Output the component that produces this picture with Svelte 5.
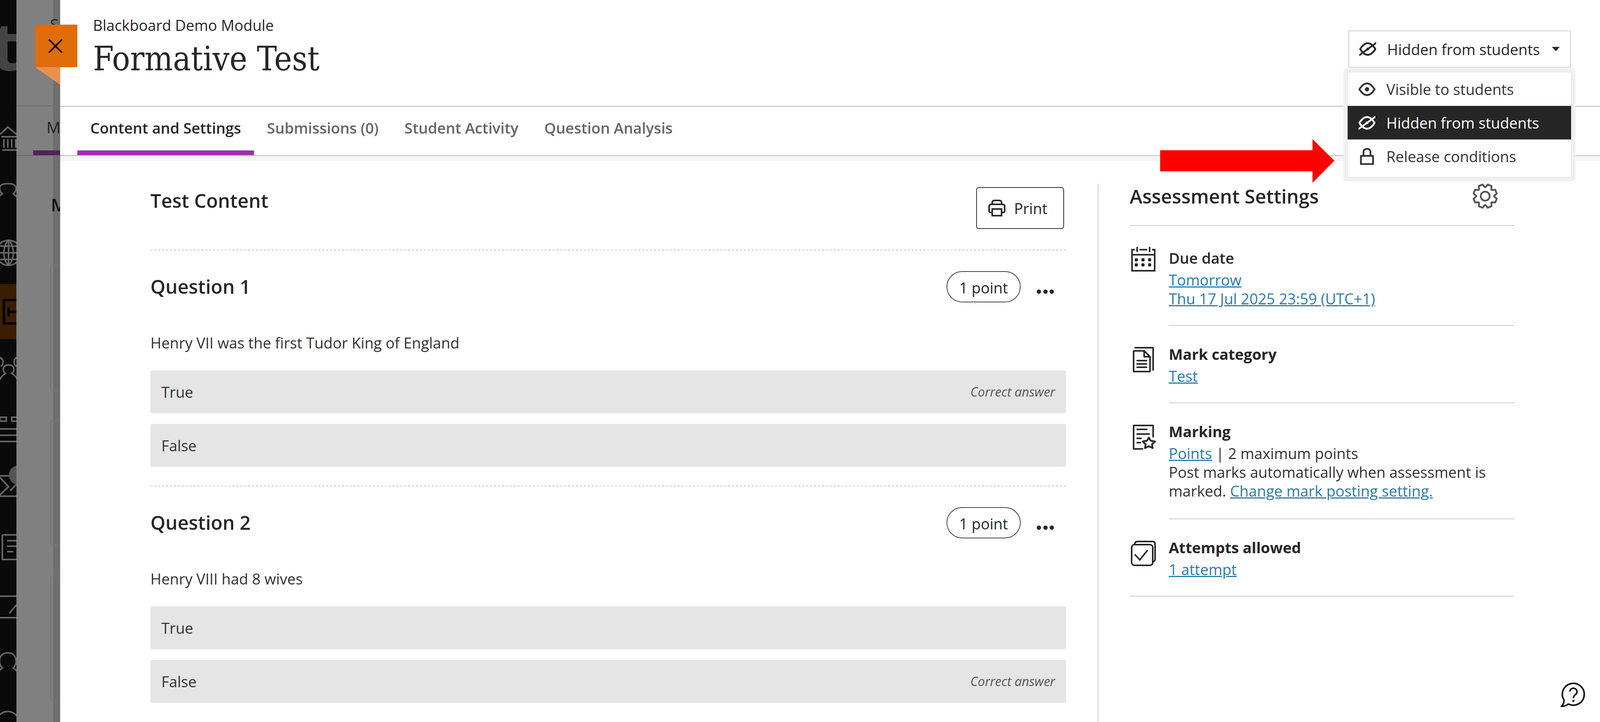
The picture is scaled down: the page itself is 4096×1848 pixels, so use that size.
<script>
    let questions = [
        { title: 'Question 1', prompt: 'Henry VII was the first Tudor King of England', correct: 'True' },
        { title: 'Question 2', prompt: 'Henry VIII had 8 wives', correct: 'False' }
    ];
    let tabs = ['Content and Settings', 'Submissions (0)', 'Student Activity', 'Question Analysis'];

    // 8 tooth outline for the settings cog, turned so a notch sits on top
    function gearPath(cx, cy, outer, inner) {
        let d = '';
        for (let i = 0; i < 8; i++) {
            let a = (i * Math.PI) / 4 - Math.PI / 2 + Math.PI / 8;
            let pts = [[inner, -0.36], [outer, -0.17], [outer, 0.17], [inner, 0.36]];
            for (let p of pts) {
                let x = cx + p[0] * Math.cos(a + p[1]);
                let y = cy + p[0] * Math.sin(a + p[1]);
                d += (d ? 'L' : 'M') + x.toFixed(1) + ' ' + y.toFixed(1);
            }
        }
        return d + 'Z';
    }
</script>

{#snippet eye()}
    <svg class="mi" viewBox="0 0 43 34">
        <path d="M2 17C9 6 15 2 21.5 2S34 6 41 17C34 28 28 32 21.5 32S9 28 2 17Z" fill="none" stroke="currentColor" stroke-width="4.5" stroke-linejoin="round" />
        <circle cx="21.5" cy="17" r="5.5" fill="currentColor" />
    </svg>
{/snippet}

{#snippet eyeOff()}
    <svg class="mi" viewBox="0 0 43 34">
        <path d="M2 17C9 6 15 2 21.5 2S34 6 41 17C34 28 28 32 21.5 32S9 28 2 17Z" fill="none" stroke="currentColor" stroke-width="4.5" stroke-linejoin="round" />
        <path d="M42 2L1 32" fill="none" stroke="currentColor" stroke-width="4.5" stroke-linecap="round" />
        <circle cx="21.5" cy="17" r="3.5" fill="currentColor" />
    </svg>
{/snippet}

<div class="page">
    <!-- what is left of the course page behind the panel -->
    <svg class="behind" viewBox="0 0 154 1848">
        <rect x="42" width="112" height="1848" fill="#808080" />
        <rect x="136" width="18" height="1848" fill="#6f6f6f" />
        <rect width="42" height="1848" fill="#0a0a0a" />
        <path d="M42 271H154M42 398H154" stroke="#6a6a6a" stroke-width="2" />
        <rect x="85" y="385" width="69" height="12" fill="#521f5c" />
        <text x="128" y="78" class="peek">SE</text>
        <text x="119" y="341" class="peek">M</text>
        <text x="130" y="541" class="peek bold">M</text>
        <g fill="none" stroke="#757575" stroke-width="2">
            <rect x="130" y="679" width="40" height="321" rx="6" />
            <rect x="130" y="1076" width="40" height="320" rx="6" />
            <rect x="130" y="1474" width="40" height="320" rx="6" />
        </g>
        <svg x="0" y="0" width="42" height="1848" viewBox="0 0 42 1848">
            <text x="-22" y="180" class="logo">t</text>
            <rect y="727" width="42" height="141" fill="#3b1e02" />
            <g fill="none" stroke="#666" stroke-width="4">
                <path d="M-14 525C-10 505 4 498 6 496C-6 484 -4 470 20 470C44 470 46 484 34 496C36 498 50 505 54 525" />
                <path d="M0 344L20 325L42 344M3 350H42M6 384H42M10 356V378M20 356V378M30 356V378M40 356V378" />
                <circle cx="22" cy="647" r="32" />
                <path d="M-10 647H54M22 615V679M-4 630H48M-4 664H48M22 615C6 630 6 664 22 679M22 615C38 630 38 664 22 679" />
                <path d="M-8 914C10 914 12 930 2 938M52 914C34 914 32 930 42 938M-4 981C0 965 10 958 14 956C4 948 8 934 22 934C36 934 40 948 30 956C34 958 44 965 48 981" />
                <path d="M0 1068H16V1078H0ZM30 1068H46V1078H30ZM0 1098H46M0 1114H46M0 1130H46" />
                <path d="M-4 1218H42M-4 1270H42M-4 1218L22 1246L-4 1270M42 1240L26 1256" />
                <path d="M6 1369H42M6 1369V1432H42M18 1384H42M18 1398H42M18 1412H34" />
                <path d="M-8 1581H42M-8 1526H42M24 1570L42 1548" />
                <path d="M-14 1739C-10 1719 4 1712 6 1710C-6 1698 -4 1671 20 1671C44 1671 46 1698 34 1710C36 1712 50 1719 54 1739" />
                <path d="M-10 1848C-8 1830 8 1821 20 1821C32 1821 48 1830 50 1848" />
            </g>
            <path d="M10 768H50V828H10ZM22 786V810M22 798H50" fill="none" stroke="#000" stroke-width="6" />
            <circle cx="48" cy="1216" r="25" fill="#555" />
        </svg>
    </svg>

    <div class="panel">
        <header class="head">
            <div class="titles">
                <div class="course">Blackboard Demo Module</div>
                <h1>Formative Test</h1>
            </div>
            <div class="vis">
                <button class="vis-btn">
                    {@render eyeOff()}
                    <span>Hidden from students</span>
                    <i class="caret"></i>
                </button>
                <ul class="menu">
                    <li>{@render eye()}<span>Visible to students</span></li>
                    <li class="active">{@render eyeOff()}<span>Hidden from students</span></li>
                    <li>
                        <svg class="mi" viewBox="0 0 43 43">
                            <path d="M12.5 20V11C12.5 5 16 2 21.5 2S30.5 5 30.5 11V20" fill="none" stroke="currentColor" stroke-width="4.5" />
                            <path d="M6 20H37V41H6Z" fill="none" stroke="currentColor" stroke-width="4.5" stroke-linejoin="round" />
                        </svg>
                        <span>Release conditions</span>
                    </li>
                </ul>
            </div>
        </header>

        <nav class="tabs">
            {#each tabs as tab, i}
                <div class="tab" class:on={i === 0}>{tab}</div>
            {/each}
        </nav>

        <div class="body">
            <section class="content">
                <div class="content-top">
                    <h2>Test Content</h2>
                    <button class="print">
                        <svg viewBox="0 0 44 43">
                            <g fill="none" stroke="currentColor" stroke-width="4">
                                <path d="M10 13V8Q10 2 16 2H28Q34 2 34 8V13" />
                                <path d="M9 33H7Q2 33 2 28V18Q2 12 8 12H36Q42 12 42 18V28Q42 33 37 33H35" />
                                <path d="M10 24H34V41H10Z" />
                            </g>
                        </svg>
                        Print
                    </button>
                </div>

                {#each questions as q}
                    <div class="question">
                        <div class="q-head">
                            <h2>{q.title}</h2>
                            <div class="q-tools">
                                <span class="pill">1 point</span>
                                <span class="dots"><i></i><i></i><i></i></span>
                            </div>
                        </div>
                        <p class="prompt">{q.prompt}</p>
                        {#each ['True', 'False'] as answer}
                            <div class="answer">
                                <span>{answer}</span>
                                {#if answer === q.correct}<em>Correct answer</em>{/if}
                            </div>
                        {/each}
                    </div>
                {/each}
            </section>

            <aside class="side">
                <div class="side-head">
                    <h2>Assessment Settings</h2>
                    <svg class="gear" viewBox="0 0 66 66">
                        <path d={gearPath(33, 33, 30.5, 23)} fill="none" stroke="#555" stroke-width="4.5" stroke-linejoin="round" />
                        <circle cx="33" cy="33" r="11.5" fill="none" stroke="#555" stroke-width="4.5" />
                    </svg>
                </div>

                <div class="row">
                    <svg class="ico cal" viewBox="0 0 64 64">
                        <g fill="none" stroke="#262626" stroke-width="4">
                            <path d="M10 8H3V62H61V8H54M22 8H42M16 1V14M48 1V14" />
                            <path d="M3 21H61" />
                        </g>
                        <g fill="#262626">
                            <rect x="10" y="30" width="8" height="8" rx="2" /><rect x="27" y="30" width="8" height="8" rx="2" /><rect x="44" y="30" width="8" height="8" rx="2" />
                            <rect x="10" y="43" width="8" height="8" rx="2" /><rect x="27" y="43" width="8" height="8" rx="2" /><rect x="44" y="43" width="8" height="8" rx="2" />
                        </g>
                    </svg>
                    <div class="info">
                        <h3 class="light">Due date</h3>
                        <div><a href="#due">Tomorrow</a></div>
                        <div><a href="#due">Thu 17 Jul 2025 23:59 (UTC+1)</a></div>
                    </div>
                </div>

                <div class="row">
                    <svg class="ico doc" viewBox="0 0 56 65">
                        <g fill="none" stroke="#262626" stroke-width="4" stroke-linecap="round" stroke-linejoin="round">
                            <path d="M6 2H52V59" />
                            <path d="M2 10H29L44 25V63H2Z" />
                            <path d="M29 10V25H44" />
                            <path d="M11 35H35M11 43.5H35M11 52H35" />
                        </g>
                    </svg>
                    <div class="info">
                        <h3>Mark category</h3>
                        <div><a href="#cat">Test</a></div>
                    </div>
                </div>

                <div class="row">
                    <svg class="ico mark" viewBox="0 0 60 65">
                        <g fill="none" stroke="#262626" stroke-width="4" stroke-linecap="round" stroke-linejoin="round">
                            <path d="M25 62H2V2H52V31" />
                            <path d="M11 12H36M11 24H42M11 35H21M11 46H19" />
                            <path d="M41 33L45.5 41L57 43L49 50L51 60L41 55L31 60L33 50L25 43L36.5 41Z" stroke-width="4.5" />
                        </g>
                    </svg>
                    <div class="info tall">
                        <h3>Marking</h3>
                        <div><a href="#marking">Points</a> | 2 maximum points</div>
                        <div>Post marks automatically when assessment is<br />marked. <a href="#posting">Change mark posting setting.</a></div>
                    </div>
                </div>

                <div class="row last">
                    <svg class="ico att" viewBox="0 0 64 65">
                        <g fill="none" stroke="#262626" stroke-width="4">
                            <path d="M10 9Q10 2 17 2H56Q62 2 62 9V46Q62 52 57 54" />
                            <rect x="2" y="10" width="54" height="53" rx="7" />
                            <path d="M10 35L23 49L43 24" />
                        </g>
                    </svg>
                    <div class="info">
                        <h3>Attempts allowed</h3>
                        <div><a href="#att">1 attempt</a></div>
                    </div>
                </div>
            </aside>
        </div>
    </div>

    <div class="close">
        <svg viewBox="0 0 40 40">
            <path d="M3 3L37 37M37 3L3 37" stroke="#000" stroke-width="4" />
        </svg>
    </div>
    <svg class="fold" viewBox="0 0 64 45"><path d="M0 0H64V45Z" fill="#e8904e" /></svg>

    <svg class="arrow" viewBox="0 0 446 112">
        <path d="M0 28.5H390V0L446 55.5L390 112V82.5H0Z" fill="#f00" />
    </svg>

    <svg class="help" viewBox="0 0 65 66">
        <path d="M21 57A28 28 0 1 0 10 47C10 54 8 59 3 63C10 63 16 61 21 57Z" fill="#fff" stroke="#111" stroke-width="4" stroke-linejoin="round" />
        <path d="M25 25A9 9 0 1 1 39 33C35 36 34 38 34 42" fill="none" stroke="#111" stroke-width="4" />
        <circle cx="34" cy="49" r="2.8" fill="#111" />
    </svg>
</div>

<style>
    :global(body) {
        margin: 0;
        background: #fff;
        color: #262626;
        font-family: "Open Sans", "Liberation Sans", sans-serif;
        font-size: 38.2px;
        line-height: 48px;
    }

    .page {
        position: relative;
        width: 4096px;
        height: 1848px;
        overflow: hidden;
    }

    .behind {
        position: absolute;
        left: 0;
        top: 0;
        width: 154px;
        height: 1848px;
    }

    .logo {
        font-family: "Open Sans", sans-serif;
        font-weight: 700;
        font-size: 170px;
        fill: #444;
    }

    .peek {
        font-family: "Open Sans", sans-serif;
        font-size: 40px;
        fill: #222;
    }

    .peek.bold {
        font-weight: 600;
        fill: #111;
        font-size: 46px;
    }

    .panel {
        position: absolute;
        left: 154px;
        top: 0;
        right: 0;
        bottom: 0;
        background: #fff;
        display: flex;
        flex-direction: column;
    }

    .head {
        height: 271px;
        border-bottom: 2px solid #bdbdbd;
        display: flex;
        justify-content: space-between;
        padding: 0 75px 0 84px;
    }

    .course {
        margin-top: 40px;
        line-height: 48px;
    }

    h1 {
        margin: 13px 0 0;
        font-family: "DejaVu Serif", "Liberation Serif", serif;
        font-stretch: condensed;
        font-weight: 400;
        font-size: 85.5px;
        line-height: 100px;
    }

    .vis {
        position: relative;
        margin-top: 78px;
        width: 569px;
        height: 95px;
    }

    .vis-btn {
        width: 569px;
        height: 95px;
        box-sizing: border-box;
        display: flex;
        align-items: center;
        gap: 28px;
        padding: 0 0 0 26px;
        background: #fff;
        color: #262626;
        border: 2px solid #cfcfcf;
        font: inherit;
    }

    .mi {
        width: 43px;
        height: 43px;
        flex: none;
    }

    .caret {
        margin-left: 3px;
        border-left: 10px solid transparent;
        border-right: 10px solid transparent;
        border-top: 11px solid #262626;
    }

    .menu {
        position: absolute;
        left: -2px;
        top: 107px;
        width: 572px;
        box-sizing: border-box;
        margin: 0;
        padding: 0 0 10px;
        list-style: none;
        background: #fff;
        border-radius: 3px;
        box-shadow: 0 0 0 1px #ddd, 0 0 0 11px #f0f0f0;
        color: #333;
    }

    .menu li {
        height: 86px;
        display: flex;
        align-items: center;
        gap: 28px;
        padding-left: 28px;
    }

    .menu li.active {
        background: #262626;
        color: #fff;
    }

    .tabs {
        display: flex;
        padding-left: 44px;
        border-bottom: 2px solid #bdbdbd;
        box-shadow: 0 13px 0 #f5f5f5;
    }

    .tab {
        height: 124px;
        box-sizing: border-box;
        padding: 30px 33px 0;
        font-weight: 600;
        color: #666;
        border-bottom: 12px solid transparent;
    }

    .tab.on {
        color: #262626;
        border-bottom-color: #a02db0;
    }

    .body {
        display: flex;
        flex: 1;
        min-height: 0;
    }

    .content {
        width: 2344px;
        margin-left: 231px;
        padding-top: 80px;
    }

    h2 {
        margin: 0;
        font-size: 49px;
        line-height: 60px;
        font-weight: 600;
    }

    .content-top {
        display: flex;
        justify-content: space-between;
        align-items: flex-start;
        margin-bottom: 53px;
    }

    .content-top h2 {
        margin-top: 4px;
    }

    .print {
        width: 225px;
        height: 107px;
        margin-right: 5px;
        box-sizing: border-box;
        display: flex;
        align-items: center;
        gap: 22px;
        padding: 0 0 0 29px;
        background: #fff;
        color: #262626;
        border: 2.5px solid #333;
        border-radius: 7px;
        font: inherit;
        font-weight: 500;
    }

    .print svg {
        width: 44px;
        height: 43px;
    }

    .question {
        border-top: 2px dashed #ccc;
        padding: 53px 0 48px;
    }

    .q-head {
        display: flex;
        justify-content: space-between;
        align-items: flex-start;
        height: 80px;
        margin-bottom: 79px;
    }

    .q-head h2 {
        margin-top: 9px;
    }

    .q-tools {
        display: flex;
        align-items: center;
        gap: 41px;
        margin-right: 31px;
    }

    .pill {
        width: 190px;
        height: 80px;
        box-sizing: border-box;
        border: 2px solid #444;
        border-radius: 40px;
        display: flex;
        align-items: center;
        justify-content: center;
        padding-top: 3px;
        font-weight: 500;
    }

    .dots {
        display: flex;
        gap: 5.5px;
        margin-top: 24px;
    }

    .dots i {
        width: 11px;
        height: 11px;
        border-radius: 50%;
        background: #262626;
    }

    .prompt {
        margin: 0 0 47px;
        color: #333;
    }

    .answer {
        height: 110px;
        box-sizing: border-box;
        padding: 0 28px;
        background: #e5e5e5;
        border-radius: 5px;
        display: flex;
        align-items: center;
        justify-content: space-between;
        color: #333;
    }

    .answer + .answer {
        margin-top: 27px;
    }

    .answer em {
        font-size: 32.6px;
        color: #555;
    }

    .side {
        width: 984px;
        margin: 71px 0 0 81px;
        padding: 2px 0 0 80px;
        border-left: 2px solid #ccc;
    }

    .side-head {
        display: flex;
        justify-content: space-between;
        align-items: flex-start;
        padding-bottom: 41px;
        margin-bottom: 10px;
        border-bottom: 2px solid #ccc;
    }

    .gear {
        width: 66px;
        height: 66px;
        margin: -3px 41px 0 0;
    }

    .row {
        display: flex;
    }

    .ico {
        flex: none;
    }

    .cal {
        width: 64px;
        height: 64px;
        margin: 43px 33px 0 3px;
    }

    .doc {
        width: 56px;
        height: 65px;
        margin: 54px 36px 0 8px;
    }

    .mark {
        width: 60px;
        height: 65px;
        margin: 55px 32px 0 8px;
    }

    .att {
        width: 64px;
        height: 65px;
        margin: 55px 33px 0 3px;
    }

    .info {
        flex: 1;
        padding: 48px 0 44px;
        border-bottom: 2px solid #ccc;
        color: #333;
    }

    .info.tall {
        padding-bottom: 47px;
    }

    .row.last {
        border-bottom: 2px solid #ccc;
    }

    .row.last .info {
        border-bottom: 0;
    }

    h3 {
        margin: 0 0 8px;
        font-size: 38.2px;
        line-height: 48px;
        font-weight: 700;
        color: #262626;
    }

    h3.light {
        font-weight: 600;
    }

    a {
        color: #2c7cab;
    }

    .close {
        position: absolute;
        left: 90px;
        top: 63px;
        width: 108px;
        height: 109px;
        background: #e16c0a;
        display: flex;
        align-items: center;
        justify-content: center;
    }

    .close svg {
        width: 40px;
        height: 42px;
        margin-left: -5px;
    }

    .fold {
        position: absolute;
        left: 90px;
        top: 172px;
        width: 64px;
        height: 45px;
    }

    .arrow {
        position: absolute;
        left: 2970px;
        top: 356px;
        width: 446px;
        height: 112px;
    }

    .help {
        position: absolute;
        left: 3994px;
        top: 1745px;
        width: 65px;
        height: 66px;
    }
</style>
